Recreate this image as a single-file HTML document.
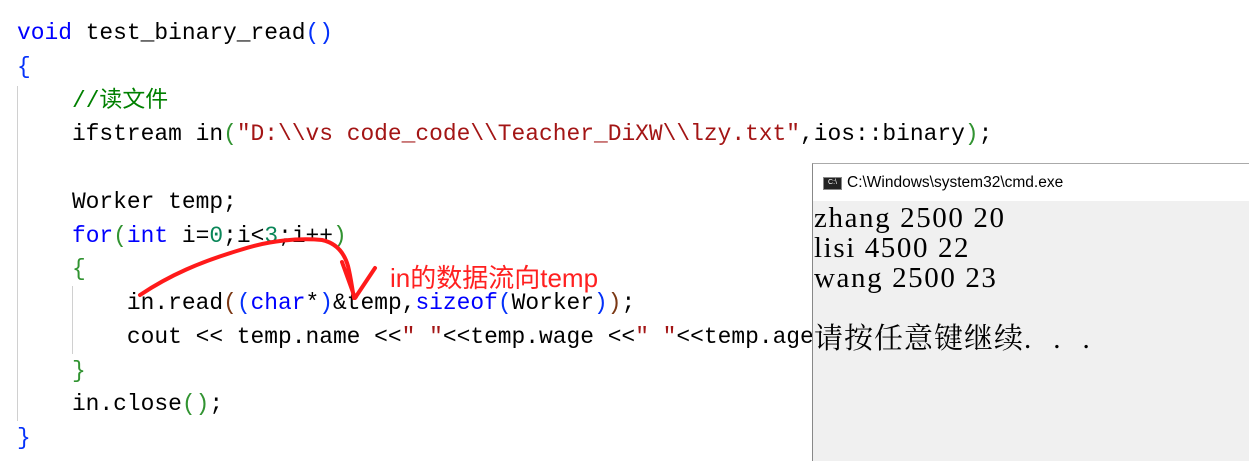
<!DOCTYPE html>
<html><head><meta charset="utf-8"><style>
body{margin:0;width:1249px;height:460px;background:#fff;position:relative;overflow:hidden;font-family:"Liberation Mono","Noto Sans CJK SC",monospace;}
.l{position:absolute;left:17px;font-size:22.9px;white-space:pre;line-height:34px;color:#000;}
.k{color:#0000ff}.s{color:#a31515}.c{color:#008000}.n{color:#098658}.p{color:#0431fa}.g{color:#319331}.o{color:#7b3814}
.guide{position:absolute;width:1px;background:#d0d0d0}
#cmd{position:absolute;left:812px;top:163px;width:437px;height:297px;background:#f0f0f0;border-left:1px solid #888;border-top:1px solid #aaa}
#title{height:37px;background:#fff;font-family:"Liberation Sans",sans-serif;font-size:15.5px;line-height:38px;padding-left:34px;position:relative;color:#000}
#icon{position:absolute;left:10px;top:13px;width:19px;height:13px;background:#222;border:1px solid #888;box-sizing:border-box;color:#fff;font-size:7px;line-height:10px;text-align:center}
.t{position:absolute;left:1px;font-family:"Liberation Serif","Noto Serif CJK SC",serif;font-size:29px;white-space:pre;color:#000;line-height:30px;letter-spacing:1.6px}
</style></head><body>
<div class="guide" style="left:17px;top:86px;height:335px"></div>
<div class="guide" style="left:72px;top:286px;height:68px"></div>
<div class="l" style="top:16px"><span class="k">void</span> test_binary_read<span class="p">()</span></div>
<div class="l" style="top:50px"><span class="p">{</span></div>
<div class="l" style="top:84px">    <span class="c">//读文件</span></div>
<div class="l" style="top:117px">    ifstream in<span class="g">(</span><span class="s">"D:\\vs code_code\\Teacher_DiXW\\lzy.txt"</span>,ios::binary<span class="g">)</span>;</div>
<div class="l" style="top:185px">    Worker temp;</div>
<div class="l" style="top:219px">    <span class="k">for</span><span class="g">(</span><span class="k">int</span> i=<span class="n">0</span>;i&lt;<span class="n">3</span>;i++<span class="g">)</span></div>
<div class="l" style="top:252px">    <span class="g">{</span></div>
<div class="l" style="top:286px">        in.read<span class="o">(</span><span class="p">(</span><span class="k">char</span>*<span class="p">)</span>&amp;temp,<span class="k">sizeof</span><span class="p">(</span>Worker<span class="p">)</span><span class="o">)</span>;</div>
<div class="l" style="top:320px">        cout &lt;&lt; temp.name &lt;&lt;<span class="s">" "</span>&lt;&lt;temp.wage &lt;&lt;<span class="s">" "</span>&lt;&lt;temp.age</div>
<div class="l" style="top:354px">    <span class="g">}</span></div>
<div class="l" style="top:387px">    in.close<span class="g">()</span>;</div>
<div class="l" style="top:421px"><span class="p">}</span></div>
<svg style="position:absolute;left:0;top:0" width="812" height="460">
<path d="M140 295 C170 275 200 262 240 250 C270 240 300 238 322 240 C336 243 344 252 348 266 C351 278 352 288 354 298 M342 262 L355 298 L375 268" fill="none" stroke="#ff1a1a" stroke-width="4" stroke-linecap="round" stroke-linejoin="round"/>
</svg>
<div style="position:absolute;left:390px;top:258px;font-family:'Liberation Sans','Noto Sans CJK SC',sans-serif;font-size:26px;color:#ff2020">in的数据流向temp</div>
<div id="cmd">
<div id="title"><div id="icon">C:\</div>C:\Windows\system32\cmd.exe</div>
<div class="t" style="top:39px">zhang 2500 20</div>
<div class="t" style="top:69px">lisi 4500 22</div>
<div class="t" style="top:99px">wang 2500 23</div>
<div class="t" style="top:160px;letter-spacing:1px">请按任意键继续<span style="letter-spacing:22px">...</span></div>
</div>
</body></html>
